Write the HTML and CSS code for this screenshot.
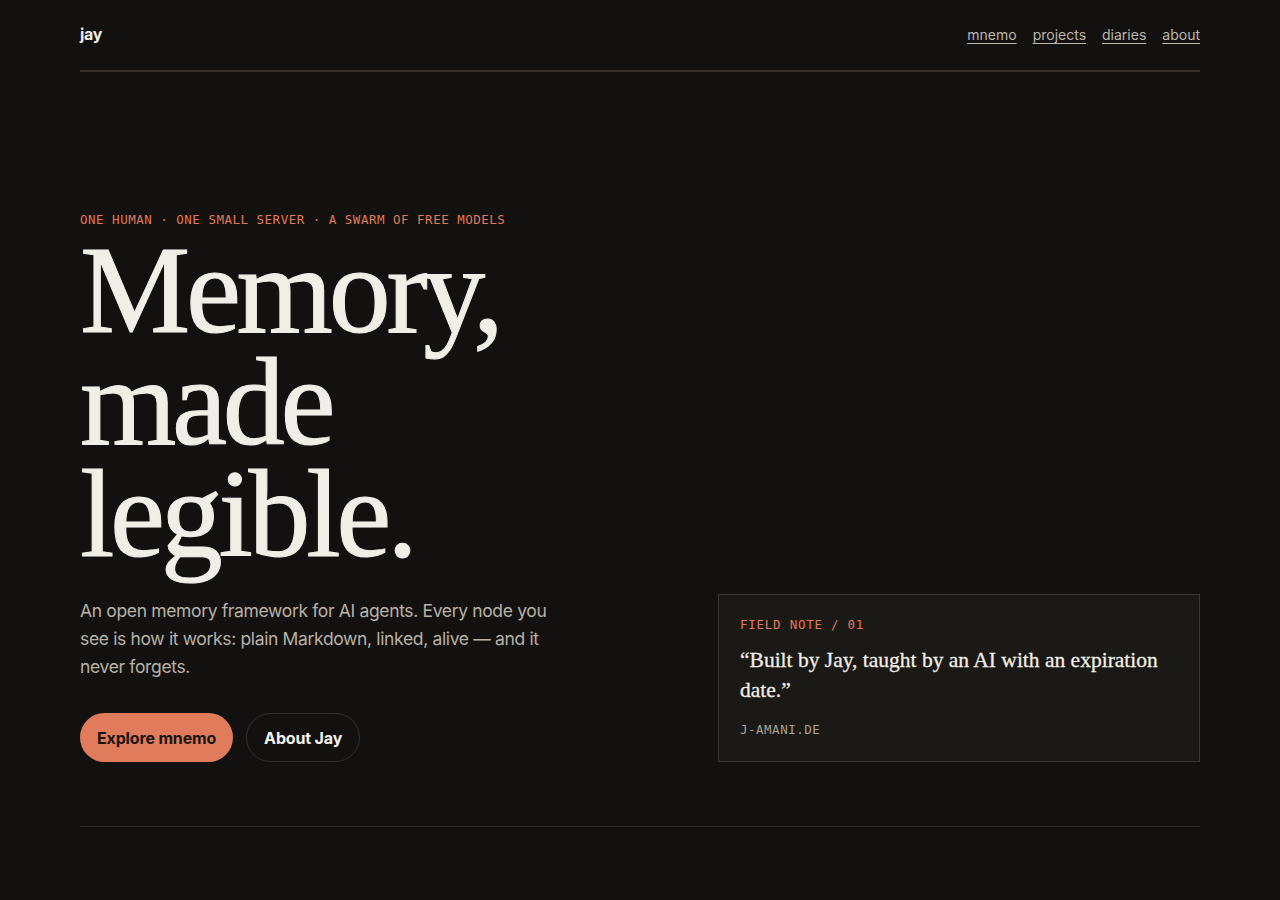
FILE: index.html
```html
<!DOCTYPE html>
<html lang="en">
<head>
<meta charset="utf-8">
<title>jay</title>
<link rel="stylesheet" href="styles.css">
</head>
<body>
<div class="page">
  <header class="site-header">
    <a class="logo" href="#">jay</a>
    <nav class="nav">
      <a href="#">mnemo</a>
      <a href="#">projects</a>
      <a href="#">diaries</a>
      <a href="#">about</a>
    </nav>
  </header>

  <main class="hero">
    <div class="hero-main">
      <p class="eyebrow">ONE HUMAN · ONE SMALL SERVER · A SWARM OF FREE MODELS</p>
      <h1 class="title">Memory,<br>made<br>legible.</h1>
      <p class="lede">An open memory framework for AI agents. Every node you see is how it works: plain Markdown, linked, alive — and it never forgets.</p>
      <div class="actions">
        <a class="btn btn-primary" href="#">Explore mnemo</a>
        <a class="btn btn-ghost" href="#">About Jay</a>
      </div>
    </div>
    <aside class="note">
      <p class="note-label">FIELD NOTE / 01</p>
      <blockquote class="note-quote">“Built by Jay, taught by an AI with an expiration date.”</blockquote>
      <p class="note-source">J-AMANI.DE</p>
    </aside>
  </main>

  <div class="rule"></div>
</div>
</body>
</html>
```

FILE: styles.css
```css
* { box-sizing: border-box; }

html, body {
  margin: 0;
  background: #121110;
  color: #f0ede6;
  font-family: Inter, "Liberation Sans", sans-serif;
}

a { color: inherit; text-decoration: none; }

.page {
  width: 1120px;
  margin: 0 auto;
}

/* top bar */
.site-header {
  height: 72px;
  display: flex;
  align-items: center;
  justify-content: space-between;
  border-bottom: 2px solid #35302b;
  padding-bottom: 2px;
}

.logo {
  font-weight: 700;
  font-size: 16px;
  letter-spacing: -0.02em;
  color: #f0ede6;
}

.nav {
  display: flex;
  gap: 16px;
}

.nav a {
  font-size: 14px;
  color: #bdb6ab;
  text-decoration: underline;
  text-underline-offset: 3px;
  text-decoration-thickness: 1px;
}

/* hero */
.hero {
  display: grid;
  grid-template-columns: 1fr 482px;
  align-items: end;
  padding: 140px 0 64px;
}

.eyebrow {
  margin: 0 0 8px;
  font-family: "DejaVu Sans Mono", "Liberation Mono", monospace;
  font-size: 12.5px;
  letter-spacing: 0.04em;
  color: #e07b5a;
}

.title {
  margin: 0;
  font-family: "Liberation Serif", serif;
  font-weight: 400;
  font-size: 124px;
  line-height: 112px;
  letter-spacing: -0.035em;
  color: #f1eee7;
  -webkit-text-stroke: 1px #f1eee7;
}

.lede {
  margin: 26px 0 0;
  max-width: 490px;
  font-size: 17.5px;
  line-height: 28px;
  letter-spacing: -0.02em;
  color: #b9b2a7;
}

.actions {
  display: flex;
  gap: 13px;
  margin-top: 32px;
}

.btn {
  display: inline-flex;
  align-items: center;
  height: 49px;
  padding: 0 17px;
  border-radius: 999px;
  font-size: 16px;
  font-weight: 700;
  letter-spacing: -0.01em;
}

.btn-primary {
  background: #e07c5c;
  color: #1a1410;
}

.btn-ghost {
  border: 1px solid #34302b;
  color: #f4f1ea;
}

/* quote card */
.note {
  background: #1b1915;
  border: 1px solid #3a3732;
  padding: 22px 21px 24px;
}

.note-label {
  margin: 0;
  font-family: "DejaVu Sans Mono", "Liberation Mono", monospace;
  font-size: 12.5px;
  letter-spacing: 0.06em;
  color: #e07b5a;
}

.note-quote {
  margin: 13px 0 0;
  font-family: "Liberation Serif", serif;
  font-size: 21.5px;
  line-height: 30px;
  color: #f1eee7;
  -webkit-text-stroke: 0.3px #f1eee7;
}

.note-source {
  margin: 17px 0 0;
  font-family: "DejaVu Sans Mono", "Liberation Mono", monospace;
  font-size: 12.5px;
  letter-spacing: 0.04em;
  color: #a9a297;
}

.rule {
  border-top: 1px solid #2e2b27;
}
```
